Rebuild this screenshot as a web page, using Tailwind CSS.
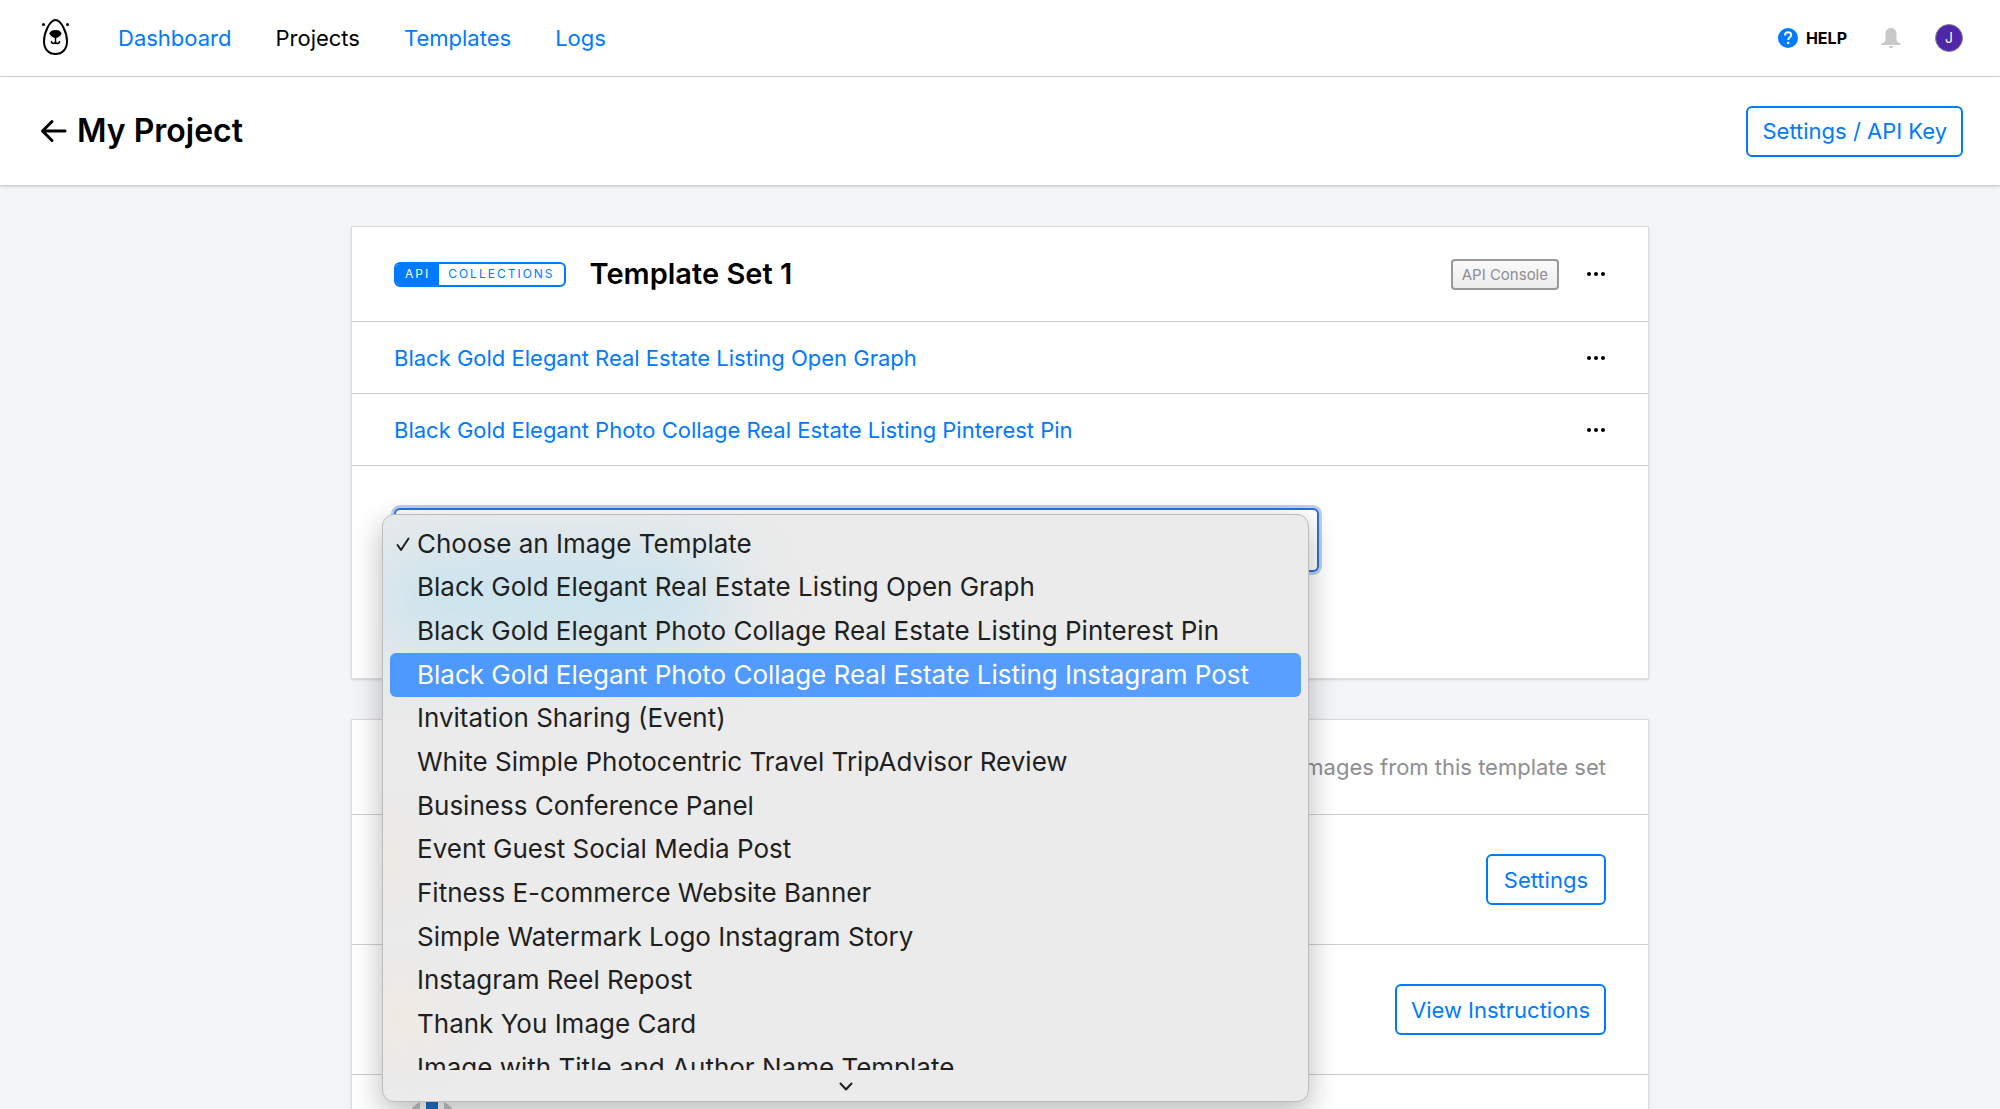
<!DOCTYPE html>
<html lang="en">
<head>
<meta charset="utf-8">
<meta name="viewport" content="width=device-width, initial-scale=1">
<title>My Project</title>
<script src="https://cdn.jsdelivr.net/npm/@tailwindcss/browser@4"></script>
</head>
<body class="flex h-screen flex-col overflow-hidden bg-[#f4f5f7] font-['Inter',sans-serif] text-[22px] leading-7 text-black">

<nav class="flex h-[77px] shrink-0 items-center justify-between border-b border-[#cfcfcf] bg-white pr-[37px] pl-10">
  <div class="flex items-center gap-11">
    <a href="#" aria-label="Home" class="mr-0.5 block">
      <svg width="32" height="40" viewBox="0 0 32 40" fill="none" stroke="#000" stroke-width="2" stroke-linecap="round">
        <path d="M15.500 2C10 2 4 14 4 23.500C4 31.500 9 36 15.500 36C22 36 27 31.500 27 23.500C27 14 21 2 15.500 2Z"/>
        <path d="M10 15.300C10 13.500 12.500 12.500 15.500 12.500C18.500 12.500 21 13.500 21 15.300C21 17.500 18 19.500 15.500 19.500C13 19.500 10 17.500 10 15.300Z" fill="#000" stroke-width="1"/>
        <path d="M15.500 19.500V24.500M11.500 23.500C11.500 26 15.500 26 15.500 23.500C15.500 26 19.500 26 19.500 23.500" stroke-width="1.500"/>
        <circle cx="3.500" cy="6.500" r="1.500" fill="#000" stroke="none"/>
        <circle cx="27.500" cy="6.500" r="1.500" fill="#000" stroke="none"/>
      </svg>
    </a>
    <a href="#" class="text-[#007aff]">Dashboard</a>
    <a href="#">Projects</a>
    <a href="#" class="text-[#007aff]">Templates</a>
    <a href="#" class="text-[#007aff]">Logs</a>
  </div>
  <div class="flex items-center">
    <a href="#" class="flex items-center gap-2 text-base font-bold">
      <svg width="20" height="20" viewBox="0 0 20 20" fill="none"><circle cx="10" cy="10" r="10" fill="#007aff"/><path d="M7 7.400C7 5.500 8.300 4.300 10.100 4.300C12 4.300 13.200 5.400 13.200 7C13.200 9.200 10.200 9.400 10.200 12" stroke="#fff" stroke-width="2"/><circle cx="10.200" cy="15" r="1.300" fill="#fff"/></svg>
      HELP
    </a>
    <button type="button" aria-label="Notifications" class="ml-[33px] block">
      <svg width="22" height="22" viewBox="0 0 22 22" fill="#c9c9c9"><path d="M11 1C7.500 1 5.500 3.500 5.500 7V12.500C5.500 14.500 4 15.500 1.500 16.500V18H20.500V16.500C18 15.500 16.500 14.500 16.500 12.500V7C16.500 3.500 14.500 1 11 1Z"/><path d="M8.500 19H13.500C13 20.500 12 21 11 21C10 21 9 20.500 8.500 19Z"/></svg>
    </button>
    <button type="button" aria-label="Account" class="ml-[33px] flex size-7 items-center justify-center rounded-full border border-[#8b8494] bg-[#4f27ab] text-sm text-white">J</button>
  </div>
</nav>

<header class="flex h-[109px] shrink-0 items-center justify-between border-b border-[#cfcfcf] bg-white pr-[37px] pl-10 shadow-sm">
  <div class="flex items-center gap-2.5">
    <a href="#" aria-label="Back">
      <svg width="27" height="26" viewBox="0 0 27 26" fill="none" stroke="#000" stroke-width="3" stroke-linecap="round" stroke-linejoin="round"><path d="M25 13H3M12 3.500L2.500 13L12 22.500"/></svg>
    </a>
    <h1 class="text-[32px] leading-10 font-semibold">My Project</h1>
  </div>
  <button type="button" class="h-[51px] rounded-md border-2 border-[#007aff] bg-white px-3.5 text-[#007aff]">Settings / API Key</button>
</header>

<main class="mx-auto flex w-full max-w-[1298px] flex-col gap-10 pt-10">

  <section class="shrink-0 border border-[#dcdcde] bg-white shadow-sm">
    <div class="flex h-[95px] items-center justify-between border-b border-[#cfcfcf] px-[42px]">
      <div class="flex items-center gap-6">
        <div class="flex h-[25px] items-stretch overflow-hidden rounded-md border-2 border-[#007aff] text-xs leading-5 tracking-[2px] text-[#007aff]">
          <span class="bg-[#007aff] px-[9px] text-white">API</span>
          <span class="px-[9px]">COLLECTIONS</span>
        </div>
        <h2 class="text-[29px] leading-9 font-semibold">Template Set 1</h2>
      </div>
      <div class="flex items-center gap-[27px]">
        <button type="button" class="h-[31px] rounded border-2 border-[#98989c] bg-linear-to-b from-[#fafafb] to-[#ececee] px-[9px] text-[15px] text-[#8e8e93]">API Console</button>
        <button type="button" aria-label="Template set options"><svg width="20" height="6" viewBox="0 0 20 6"><circle cx="3" cy="3" r="2"/><circle cx="10" cy="3" r="2"/><circle cx="17" cy="3" r="2"/></svg></button>
      </div>
    </div>
    <div class="flex h-[72px] items-center justify-between border-b border-[#cfcfcf] px-[42px]">
      <a href="#" class="text-[#007aff]">Black Gold Elegant Real Estate Listing Open Graph</a>
      <button type="button" aria-label="Template options"><svg width="20" height="6" viewBox="0 0 20 6"><circle cx="3" cy="3" r="2"/><circle cx="10" cy="3" r="2"/><circle cx="17" cy="3" r="2"/></svg></button>
    </div>
    <div class="flex h-[72px] items-center justify-between border-b border-[#cfcfcf] px-[42px]">
      <a href="#" class="text-[#007aff]">Black Gold Elegant Photo Collage Real Estate Listing Pinterest Pin</a>
      <button type="button" aria-label="Template options"><svg width="20" height="6" viewBox="0 0 20 6"><circle cx="3" cy="3" r="2"/><circle cx="10" cy="3" r="2"/><circle cx="17" cy="3" r="2"/></svg></button>
    </div>
    <div class="h-[212px] px-[42px] pt-[42px]">
      <div class="relative w-[925px]">
        <select aria-label="Image template" class="block h-16 w-full appearance-none rounded-md border-2 border-[#2f6fd6] bg-white ring-3 ring-[#b9d0f0]"></select>

        <!-- Open list of the template picker -->
        <div class="absolute top-1.5 -left-3 z-10 flex h-[588px] w-[927px] flex-col overflow-hidden rounded-xl border border-[#bdbdbd] bg-[#ebebeb] px-[7px] pt-[7px] text-[26px] leading-8 text-[#1f1f1f] shadow-[0_10px_30px_rgba(0,0,0,0.28)]">
          <div class="absolute top-9 -left-4 h-24 w-[360px] rounded-full bg-[#c5e2ee] blur-2xl"></div>
          <div class="absolute top-[315px] -left-8 h-14 w-14 rounded-full bg-[#f0e8df] blur-xl"></div>
          <div class="absolute top-[470px] -left-6 h-16 w-20 rounded-full bg-[#f1e9e0] blur-xl"></div>
          <ul class="relative grid h-[524px] shrink-0 grid-rows-12 whitespace-nowrap" role="listbox" aria-label="Image templates">
            <li role="option" aria-selected="true" class="flex items-center pl-1.5"><svg class="mr-[7px]" width="14" height="16" viewBox="0 0 14 16" fill="none" stroke="#1f1f1f" stroke-width="2" stroke-linecap="round" stroke-linejoin="round"><path d="M1.500 9L5 14L12.500 2.500"/></svg>Choose an Image Template</li>
            <li role="option" class="flex items-center pl-[27px]">Black Gold Elegant Real Estate Listing Open Graph</li>
            <li role="option" class="flex items-center pl-[27px]">Black Gold Elegant Photo Collage Real Estate Listing Pinterest Pin</li>
            <li role="option" class="flex items-center rounded-md bg-linear-to-r from-[#4c98fd] to-[#599fff] pl-[27px] text-white">Black Gold Elegant Photo Collage Real Estate Listing Instagram Post</li>
            <li role="option" class="flex items-center pl-[27px]">Invitation Sharing (Event)</li>
            <li role="option" class="flex items-center pl-[27px]">White Simple Photocentric Travel TripAdvisor Review</li>
            <li role="option" class="flex items-center pl-[27px]">Business Conference Panel</li>
            <li role="option" class="flex items-center pl-[27px]">Event Guest Social Media Post</li>
            <li role="option" class="flex items-center pl-[27px]">Fitness E-commerce Website Banner</li>
            <li role="option" class="flex items-center pl-[27px]">Simple Watermark Logo Instagram Story</li>
            <li role="option" class="flex items-center pl-[27px]">Instagram Reel Repost</li>
            <li role="option" class="flex items-center pl-[27px]">Thank You Image Card</li>
          </ul>
          <div class="relative h-6 shrink-0 overflow-hidden pt-1.5 pl-[27px] whitespace-nowrap">Image with Title and Author Name Template</div>
          <svg class="mx-auto mt-3 shrink-0" width="14" height="9" viewBox="0 0 14 9" fill="none" stroke="#1f1f1f" stroke-width="2" stroke-linecap="round" stroke-linejoin="round"><path d="M1.500 1.500L7 7.500L12.500 1.500"/></svg>
        </div>
      </div>
    </div>
  </section>

  <section class="shrink-0 border border-[#dcdcde] bg-white shadow-sm">
    <div class="flex h-[95px] items-center justify-end border-b border-[#cfcfcf] px-[42px] text-[#8e8e93]">images from this template set</div>
    <div class="flex h-[130px] items-center justify-end border-b border-[#cfcfcf] px-[42px]">
      <button type="button" class="h-[51px] rounded-md border-2 border-[#007aff] bg-white px-4 text-[#007aff]">Settings</button>
    </div>
    <div class="flex h-[130px] items-center justify-end border-b border-[#cfcfcf] px-[42px]">
      <button type="button" class="h-[51px] rounded-md border-2 border-[#007aff] bg-white px-3.5 text-[#007aff]">View Instructions</button>
    </div>
    <div class="flex h-[130px] px-[58px] pt-6">
      <svg width="44" height="60" viewBox="0 0 44 60"><circle cx="22" cy="26" r="26" fill="#c4c4c6"/><path d="M10 0H34V60H10Z" fill="#fff"/><path d="M16 0H28V60H16Z" fill="#1f6fc4"/></svg>
    </div>
  </section>
</main>
</body>
</html>
